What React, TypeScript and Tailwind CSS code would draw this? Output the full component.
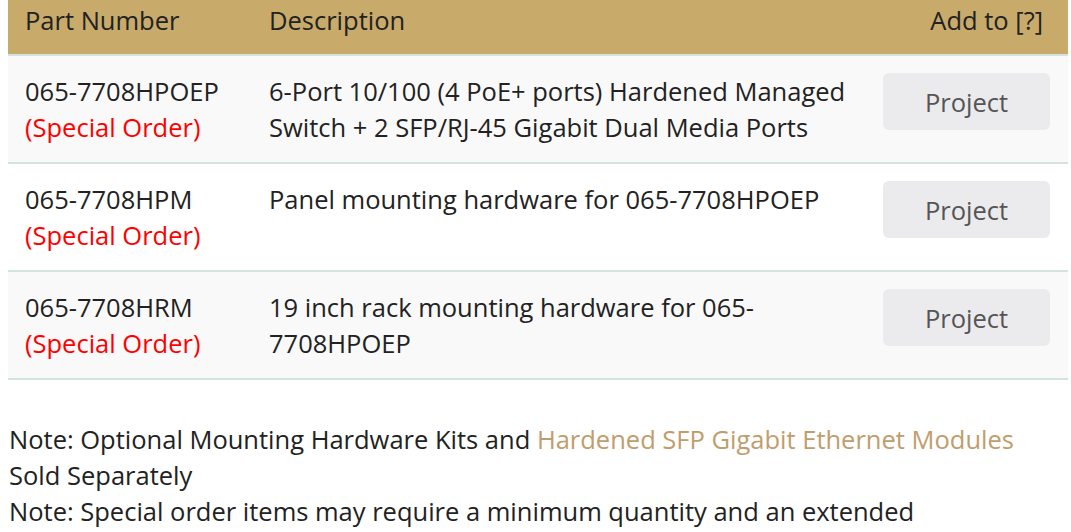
const rows = [
  {
    part: "065-7708HPOEP",
    desc: "6-Port 10/100 (4 PoE+ ports) Hardened Managed Switch + 2 SFP/RJ-45 Gigabit Dual Media Ports",
    shade: true,
  },
  {
    part: "065-7708HPM",
    desc: "Panel mounting hardware for 065-7708HPOEP",
    shade: false,
  },
  {
    part: "065-7708HRM",
    desc: "19 inch rack mounting hardware for 065-7708HPOEP",
    shade: true,
  },
];

export default function App() {
  return (
    <div className="w-[1071px] h-[532px] overflow-hidden bg-white font-['Open_Sans',sans-serif] text-[25.5px] leading-[36px] text-[#222]">
      <div className="mx-[8px] w-[1060px]">
        {/* Header */}
        <div className="grid grid-cols-[244px_618px_198px] bg-[#c8aa6a] border-b-2 border-[#d3e4e0] pt-[2px] pb-[16px]">
          <div className="pl-[17px]">Part Number</div>
          <div className="pl-[17px]">Description</div>
          <div className="pr-[25px] text-right">Add to [?]</div>
        </div>

        {/* Rows */}
        {rows.map((r) => (
          <div
            key={r.part}
            className={`grid grid-cols-[244px_618px_198px] border-b-2 border-[#d3e4e0] pt-[17px] pb-[17px] ${
              r.shade ? "bg-[#f9f9f9]" : "bg-white"
            }`}
          >
            <div className="pl-[17px]">
              <div>{r.part}</div>
              <div className="text-[#ff0000]">(Special Order)</div>
            </div>
            <div className="px-[17px]">{r.desc}</div>
            <div className="flex justify-end pr-[18px]">
              <button className="w-[167px] h-[57px] rounded-[6px] bg-[#ebeaed] text-[#555] text-[25.5px]">
                Project
              </button>
            </div>
          </div>
        ))}
      </div>

      {/* Notes */}
      <div className="mt-[41px] pl-[9px] w-[1019px]">
        <p>
          Note: Optional Mounting Hardware Kits and{" "}
          <a className="text-[#bf9d6c]">Hardened SFP Gigabit Ethernet Modules</a> Sold Separately
        </p>
        <p>Note: Special order items may require a minimum quantity and an extended lead{"\u00a0"}time.</p>
      </div>
    </div>
  );
}
